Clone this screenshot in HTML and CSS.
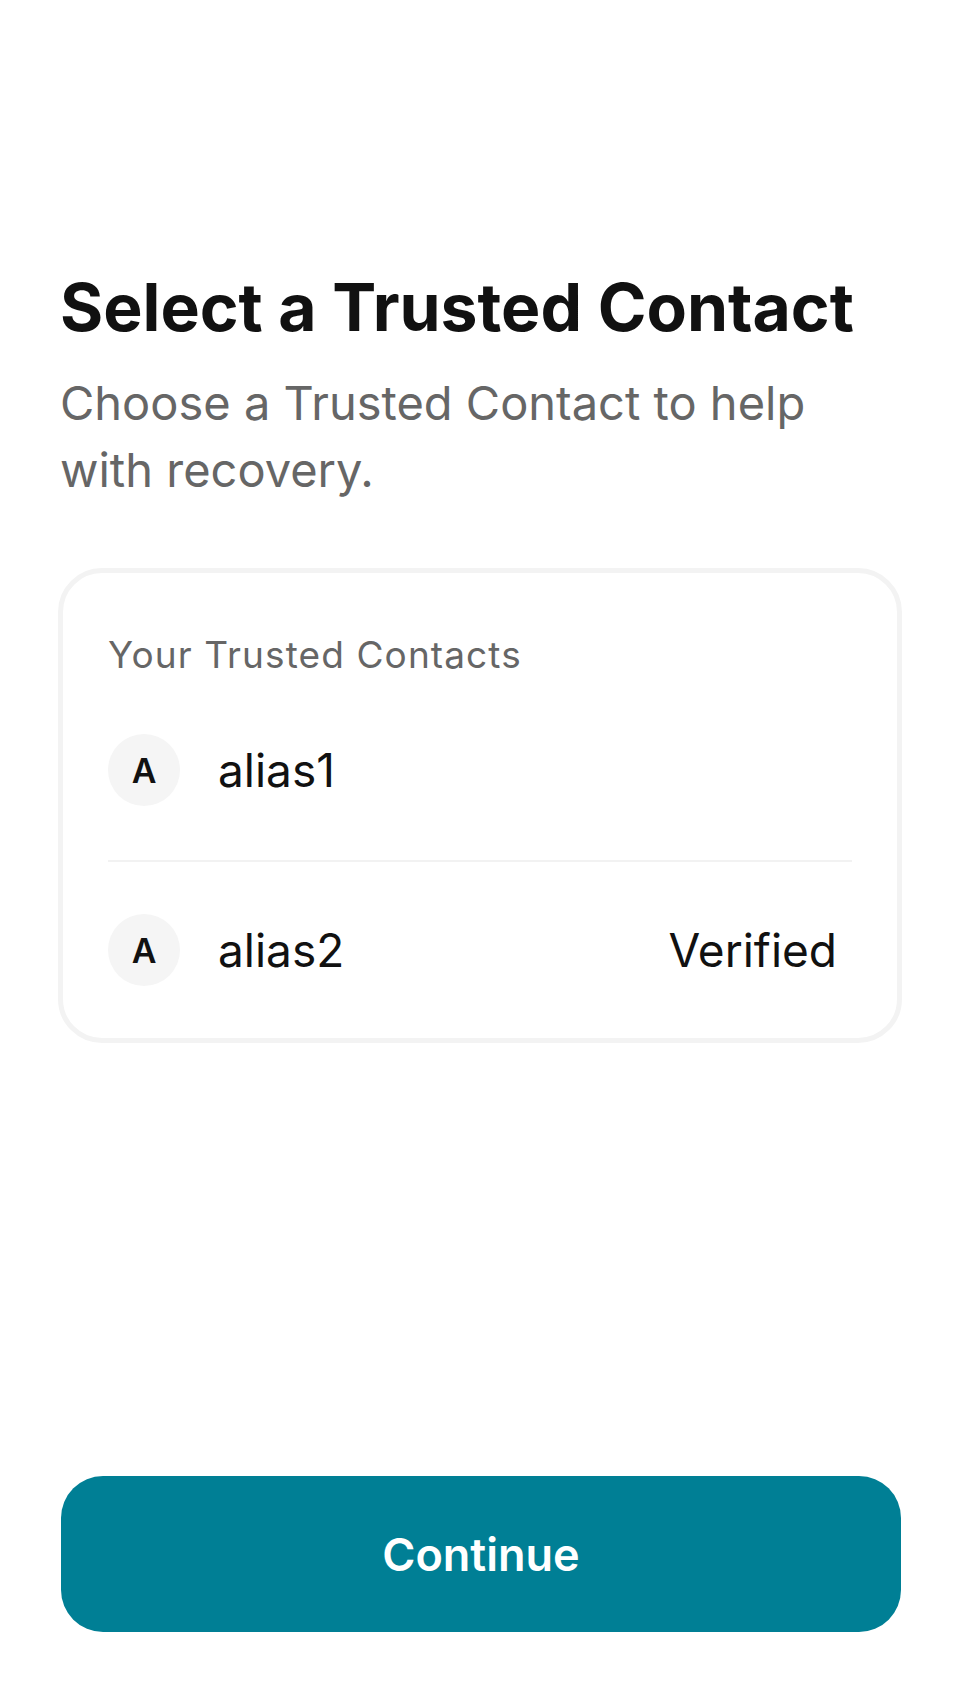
FILE: index.html
```html
<!DOCTYPE html>
<html lang="en">
<head>
<meta charset="utf-8">
<title>Select a Trusted Contact</title>
<link rel="stylesheet" href="styles.css">
</head>
<body>
<main class="screen">
  <h1 class="title">Select a Trusted Contact</h1>
  <p class="subtitle">Choose a Trusted Contact to help with recovery.</p>
  <section class="card">
    <div class="card-label">Your Trusted Contacts</div>
    <div class="contact">
      <div class="avatar">A</div>
      <div class="name">alias1</div>
    </div>
    <div class="contact contact--divided">
      <div class="avatar">A</div>
      <div class="name">alias2</div>
      <div class="status">Verified</div>
    </div>
  </section>
  <button class="primary-btn" type="button">Continue</button>
</main>
</body>
</html>
```
FILE: styles.css
```css
* { box-sizing: border-box; }
html, body { margin: 0; padding: 0; background: #ffffff; }
body {
  font-family: Inter, "Noto Sans", "Liberation Sans", sans-serif;
  color: #111111;
}
.screen {
  display: flex;
  flex-direction: column;
  height: 1704px;
  padding: 0 58px 72px;
}
.title {
  margin: 268px 0 0 2px;
  font-size: 66px;
  line-height: 79px;
  font-weight: 700;
  color: #111111;
}
.subtitle {
  margin: 22px 0 0 2px;
  padding-right: 30px;
  font-size: 47px;
  line-height: 67px;
  font-weight: 400;
  color: #666666;
}
.card {
  margin-top: 65px;
  border: 5px solid #f3f3f3;
  border-radius: 44px;
  padding: 57px 45px 0;
}
.card-label {
  font-size: 37px;
  line-height: 50px;
  font-weight: 400;
  letter-spacing: 1.1px;
  color: #666666;
}
.contact {
  display: flex;
  align-items: center;
  height: 180px;
}
.contact--divided {
  border-top: 2px solid #f2f2f2;
  height: 178px;
}
.avatar {
  flex: none;
  width: 72px;
  height: 72px;
  border-radius: 50%;
  background: #f5f5f5;
  display: flex;
  align-items: center;
  justify-content: center;
  font-size: 34px;
  font-weight: 600;
  color: #111111;
}
.name {
  margin-left: 38px;
  font-size: 46px;
  font-weight: 400;
  color: #111111;
}
.status {
  margin-left: auto;
  padding-right: 15px;
  font-size: 46px;
  font-weight: 400;
  color: #111111;
}
.primary-btn {
  margin: auto 1px 0 3px;
  height: 156px;
  border: none;
  border-radius: 42px;
  background: #007f95;
  color: #ffffff;
  font-family: inherit;
  font-size: 45px;
  font-weight: 600;
}
```
